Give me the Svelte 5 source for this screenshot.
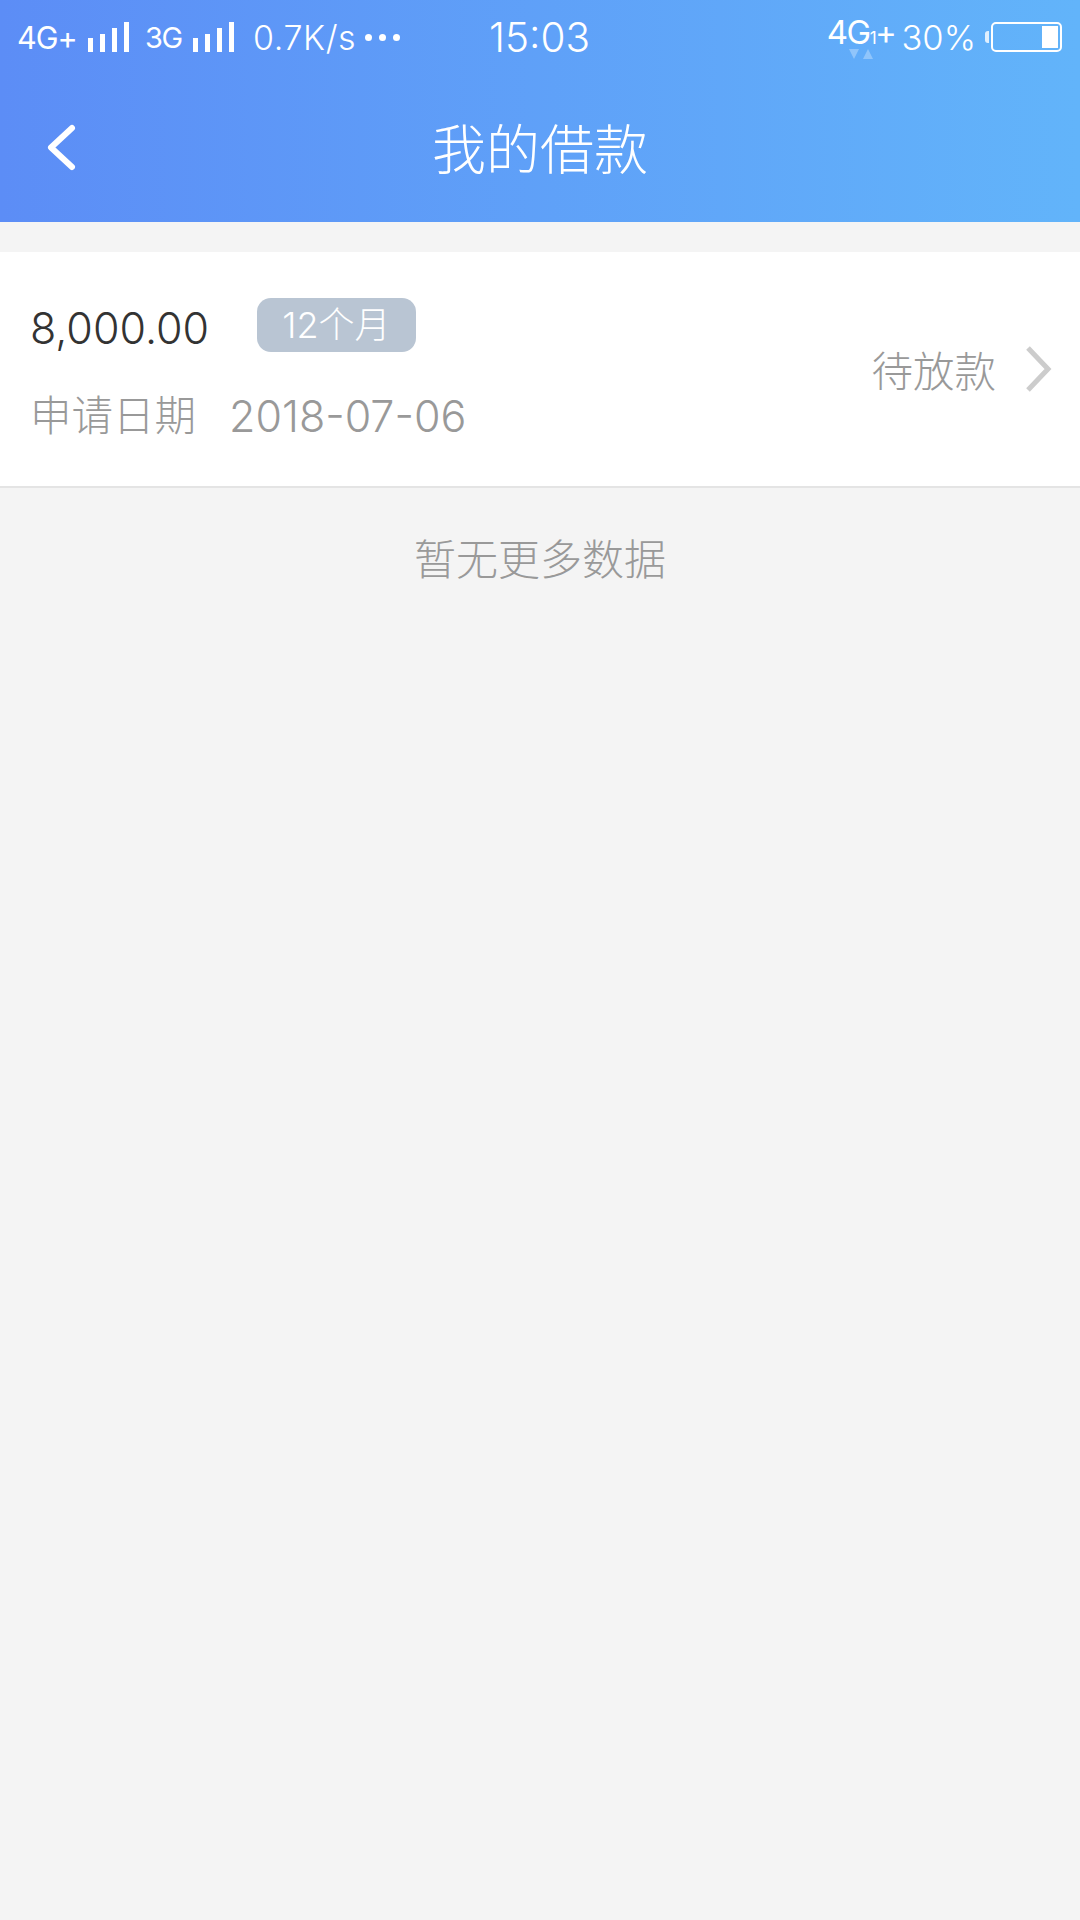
<script>
  const order = { amount: '8,000.00', term: '12个月', date: '2018-07-06', status: '待放款' };
  const bars = [14, 18, 24, 30];
</script>

<div class="page">
  <header class="head">
    <div class="status">
      <div class="side left">
        <span class="net net-a">4G+</span>
        <div class="signal">
          {#each bars as h}
            <i style="height:{h}px"></i>
          {/each}
        </div>
        <span class="net net-b">3G</span>
        <div class="signal">
          {#each bars as h}
            <i style="height:{h}px"></i>
          {/each}
        </div>
        <span class="speed">0.7K/s</span>
        <div class="dots"><b></b><b></b><b></b></div>
      </div>
      <span class="clock">15:03</span>
      <div class="side right">
        <div class="sim">
          <span class="sim-text">4G<small>1</small>+</span>
          <svg class="arrows" width="24" height="11" viewBox="0 0 24 11">
            <path d="M0 0h10l-5 10z" fill="#fff" opacity=".3" />
            <path d="M14 10h10l-5-10z" fill="#fff" opacity=".3" />
          </svg>
        </div>
        <span class="pct">30%</span>
        <div class="battery">
          <span class="nub"></span>
          <div class="cell"><span class="level"></span></div>
        </div>
      </div>
    </div>
    <div class="nav">
      <svg class="back" width="34" height="52" viewBox="0 0 34 52">
        <path d="M28 6 L7 25.500 L28 45" fill="none" stroke="#fff" stroke-width="6" stroke-linecap="round" stroke-linejoin="round" />
      </svg>
      <h1>我的借款</h1>
    </div>
  </header>

  <div class="card">
    <div class="info">
      <div class="top">
        <span class="amount">{order.amount}</span>
        <span class="term">{order.term}</span>
      </div>
      <div class="apply">
        <span>申请日期</span>
        <span class="date">{order.date}</span>
      </div>
    </div>
    <div class="state">
      <span>{order.status}</span>
      <svg width="26" height="46" viewBox="0 0 26 46">
        <path d="M2 2 L22 23 L2 44" fill="none" stroke="#ccc" stroke-width="5" />
      </svg>
    </div>
  </div>

  <p class="empty">暂无更多数据</p>
</div>

<style>
  :global(body) {
    margin: 0;
    background: #f4f4f4;
  }

  .page {
    width: 1080px;
    height: 1920px;
    background: #f4f4f4;
    font-family: Inter, "Noto Sans CJK SC", sans-serif;
    font-weight: 300;
    overflow: hidden;
  }

  .head {
    height: 222px;
    background: linear-gradient(90deg, #5c8df6, #62b4fa);
    color: #fff;
  }

  .status {
    height: 74px;
    padding: 0 18px 0 17px;
    display: grid;
    grid-template-columns: 1fr auto 1fr;
    align-items: center;
  }

  .side {
    display: flex;
    align-items: center;
  }

  .right {
    justify-content: flex-end;
  }

  .net {
    font-weight: 400;
    letter-spacing: -1.5px;
  }

  .net-a {
    font-size: 30.500px;
    width: 71px;
    letter-spacing: -1px;
  }

  .net-b {
    font-size: 29px;
    width: 48px;
    margin-left: 16px;
  }

  .signal {
    display: flex;
    align-items: flex-end;
    gap: 7px;
    height: 30px;
  }

  .signal i {
    width: 5px;
    background: #fff;
  }

  .speed {
    font-size: 34px;
    margin-left: 19px;
    letter-spacing: .6px;
  }

  .dots {
    display: flex;
    gap: 7px;
    margin-left: 9px;
  }

  .dots b {
    width: 7px;
    height: 7px;
    border-radius: 50%;
    background: #fff;
  }

  .clock {
    font-size: 40.500px;
  }

  .sim {
    position: relative;
    margin-right: 6px;
  }

  .sim-text {
    display: block;
    font-size: 33px;
    font-weight: 400;
    letter-spacing: -1.500px;
    position: relative;
    top: -5px;
  }

  .sim-text small {
    font-size: 17px;
  }

  .arrows {
    position: absolute;
    left: 22px;
    top: 32px;
  }

  .pct {
    font-size: 34.500px;
    margin-right: 9px;
  }

  .battery {
    display: flex;
    align-items: center;
  }

  .nub {
    width: 4px;
    height: 12px;
    background: #fff;
    opacity: .8;
    border-radius: 3px 0 0 3px;
    margin-right: 2px;
  }

  .cell {
    box-sizing: border-box;
    width: 71px;
    height: 30px;
    border: 2px solid #fff;
    border-radius: 5px;
    display: flex;
    justify-content: flex-end;
    align-items: center;
    padding-right: 2px;
  }

  .level {
    width: 16px;
    height: 22px;
    background: #fff;
  }

  .nav {
    height: 144px;
    position: relative;
    display: flex;
    align-items: center;
    justify-content: center;
  }

  .back {
    position: absolute;
    left: 44px;
    top: 48px;
  }

  h1 {
    margin: 0;
    font-size: 54px;
    font-weight: 300;
  }

  .card {
    margin-top: 30px;
    height: 234px;
    background: #fff;
    border-bottom: 2px solid #e4e4e4;
    display: flex;
    justify-content: space-between;
    align-items: center;
    padding: 0 28px 0 30px;
  }

  .info {
    align-self: flex-start;
    padding-top: 46px;
  }

  .top {
    display: flex;
    align-items: center;
  }

  .amount {
    font-size: 43px;
    color: #333;
    width: 227px;
    line-height: 54px;
    position: relative;
    top: 3px;
  }

  .term {
    width: 159px;
    height: 54px;
    line-height: 54px;
    text-align: center;
    background: #b9c5d3;
    border-radius: 14px;
    color: #fff;
    font-size: 36px;
  }

  .apply {
    margin-top: 36px;
    font-size: 41.500px;
    color: #999;
    line-height: 56px;
    display: flex;
    gap: 33px;
  }

  .date {
    font-size: 43px;
  }

  .state {
    display: flex;
    align-items: center;
    gap: 30px;
    font-size: 41.500px;
    color: #999;
  }

  .empty {
    margin: 42px 0 0;
    text-align: center;
    font-size: 42px;
    color: #999;
    line-height: 60px;
  }
</style>
